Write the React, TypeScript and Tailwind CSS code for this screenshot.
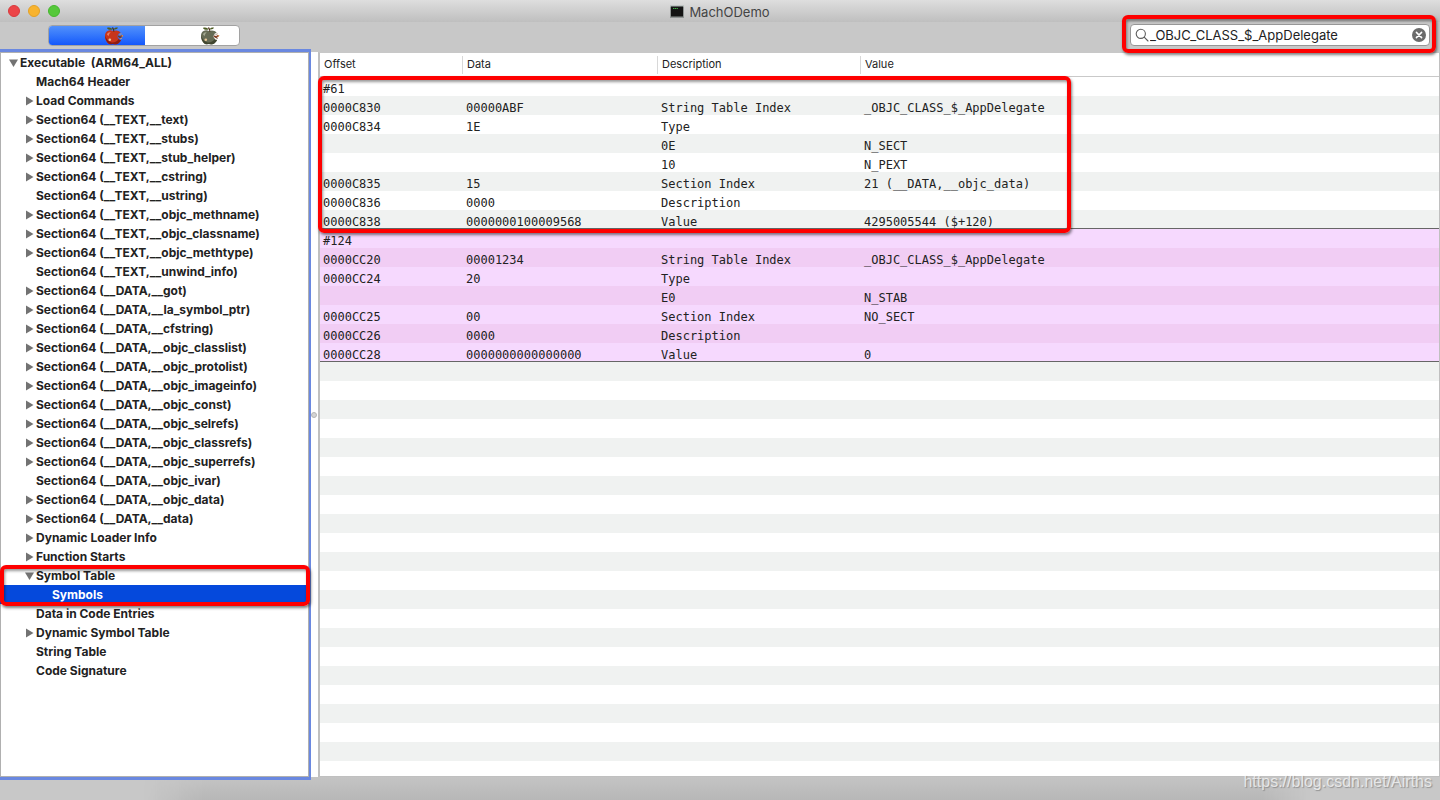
import { useState } from "react";

type Row = [string, string, string, string];

const symbols: { id: string; stab: boolean; rows: Row[] }[] = [
  {
    id: "#61",
    stab: false,
    rows: [
      ["0000C830", "00000ABF", "String Table Index", "_OBJC_CLASS_$_AppDelegate"],
      ["0000C834", "1E", "Type", ""],
      ["", "", "0E", "N_SECT"],
      ["", "", "10", "N_PEXT"],
      ["0000C835", "15", "Section Index", "21 (__DATA,__objc_data)"],
      ["0000C836", "0000", "Description", ""],
      ["0000C838", "0000000100009568", "Value", "4295005544 ($+120)"],
    ],
  },
  {
    id: "#124",
    stab: true,
    rows: [
      ["0000CC20", "00001234", "String Table Index", "_OBJC_CLASS_$_AppDelegate"],
      ["0000CC24", "20", "Type", ""],
      ["", "", "E0", "N_STAB"],
      ["0000CC25", "00", "Section Index", "NO_SECT"],
      ["0000CC26", "0000", "Description", ""],
      ["0000CC28", "0000000000000000", "Value", "0"],
    ],
  },
];

type Node = { label: string; leaf?: boolean };

const nodes: Node[] = [
  { label: "Mach64 Header", leaf: true },
  { label: "Load Commands" },
  { label: "Section64 (__TEXT,__text)" },
  { label: "Section64 (__TEXT,__stubs)" },
  { label: "Section64 (__TEXT,__stub_helper)" },
  { label: "Section64 (__TEXT,__cstring)" },
  { label: "Section64 (__TEXT,__ustring)", leaf: true },
  { label: "Section64 (__TEXT,__objc_methname)" },
  { label: "Section64 (__TEXT,__objc_classname)" },
  { label: "Section64 (__TEXT,__objc_methtype)" },
  { label: "Section64 (__TEXT,__unwind_info)", leaf: true },
  { label: "Section64 (__DATA,__got)" },
  { label: "Section64 (__DATA,__la_symbol_ptr)" },
  { label: "Section64 (__DATA,__cfstring)" },
  { label: "Section64 (__DATA,__objc_classlist)" },
  { label: "Section64 (__DATA,__objc_protolist)" },
  { label: "Section64 (__DATA,__objc_imageinfo)" },
  { label: "Section64 (__DATA,__objc_const)" },
  { label: "Section64 (__DATA,__objc_selrefs)" },
  { label: "Section64 (__DATA,__objc_classrefs)" },
  { label: "Section64 (__DATA,__objc_superrefs)" },
  { label: "Section64 (__DATA,__objc_ivar)", leaf: true },
  { label: "Section64 (__DATA,__objc_data)" },
  { label: "Section64 (__DATA,__data)" },
  { label: "Dynamic Loader Info" },
  { label: "Function Starts" },
];

const trailing: Node[] = [
  { label: "Data in Code Entries", leaf: true },
  { label: "Dynamic Symbol Table" },
  { label: "String Table", leaf: true },
  { label: "Code Signature", leaf: true },
];

function Arrow({ open }: { open?: boolean }) {
  return (
    <svg className="size-3 shrink-0" viewBox="0 0 12 12" fill="#727272" aria-hidden="true">
      {open ? <path d="M1 2.500h9L5.500 10z" /> : <path d="M2 1.500v9L9.500 6z" />}
    </svg>
  );
}

function Item({ label, leaf, open, indent = "pl-6", selected }: Node & { open?: boolean; indent?: string; selected?: boolean }) {
  return (
    <button
      type="button"
      className={`flex h-[19px] w-full items-center whitespace-pre text-left ${indent} ${
        selected ? "bg-[#0549dc] text-white" : "text-[#222]"
      }`}
    >
      {leaf ? <span className="w-3 shrink-0" /> : <Arrow open={open} />}
      {label}
    </button>
  );
}

function Apple({ skin, shade, shine, leaf }: { skin: string; shade: string; shine: string; leaf: string }) {
  return (
    <svg className="h-5 w-[22px]" viewBox="0 0 22 20" aria-hidden="true">
      <path
        d="M10 5C7.500 3.600 4 4.200 2.600 7C1 10.500 2.500 15.500 5.500 17.700C7 18.700 8.500 18 10 18C12 18.500 14 18.800 15.500 17.300C16.700 16.300 17.500 15.200 18 14C16.300 14.200 15.200 13 15.500 11.800C14 11.300 14 9.500 15.300 8.900C15.200 7.600 16.300 6.800 17.700 6.900C16 4.300 12.800 4 10 5Z"
        fill={skin}
      />
      <path
        d="M2.300 9.500C2 13 3.500 16 5.800 17.800C7.300 18.700 8.500 18 10 18C12 18.500 14.500 18.600 16 16.800C17 15.800 17.600 15 18 14C16.800 14.300 16 13.800 15.600 13C14 15.800 11 17 8 16.300C5 15.500 3 12.500 2.300 9.500Z"
        fill={shade}
      />
      <path d="M4 8.500C4.500 6.800 6 5.900 7.800 6.200C6.500 7.200 6 8.500 5.500 10.200Z" fill={shine} />
      <path d="M10.500 5.800C10.300 4.200 9.700 3 8.800 1.800L10 1.300C11 2.700 11.400 4.200 11.300 5.800Z" fill="#4a2b16" />
      <path d="M9.500 3.500C7.500 4.200 5 3.800 3.800 1.900C6 0.900 8.700 1.400 9.500 3.500Z" fill={leaf} />
      <path d="M10.600 3.300C11.500 1.900 13.300 1.200 15 1.800C14.200 3.300 12.200 3.900 10.600 3.300Z" fill={leaf} />
      <circle cx="6.800" cy="13.700" r="1.300" fill="#ecc99a" />
      <path d="M15 10.700C16 9.300 17 12.200 18 10.600C18.600 9.600 19.200 9.600 19.700 10.300" fill="none" stroke="#7d3b22" strokeWidth="1.700" />
      <path d="M16.500 8.500L18.700 7.800M17 13L19 12.300" stroke="#b59a86" strokeWidth="1" />
      <circle cx="19.300" cy="9.800" r="0.900" fill="#d9955b" />
    </svg>
  );
}

const cell = "overflow-hidden whitespace-pre p-0 pl-[3px] pt-[5px] align-top leading-[14px]";
const head = "h-6 border-b border-[#c9c9c9] p-0 text-left font-normal";
const mark = "pointer-events-none absolute z-20 rounded-md border-4 border-[#fe0000] shadow-[1px_2px_3px_rgba(0,0,0,0.5),inset_1px_2px_3px_rgba(0,0,0,0.4)]";

export default function App() {
  const [query, setQuery] = useState("_OBJC_CLASS_$_AppDelegate");
  let line = 0;

  return (
    <div className="relative flex h-screen flex-col overflow-hidden bg-[#c8c8c8] font-['Inter','Liberation_Sans',sans-serif] text-xs text-[#222]">
      <header className="relative flex h-[22px] shrink-0 items-center justify-center bg-linear-to-b from-[#dedede] to-[#bfbfbf]">
        <div className="absolute left-2 flex gap-2">
          <button type="button" aria-label="Close" className="size-3 rounded-full border border-[#d93a3d] bg-[#ec4548]" />
          <button type="button" aria-label="Minimize" className="size-3 rounded-full border border-[#e4a125] bg-[#f8b32e]" />
          <button type="button" aria-label="Zoom" className="size-3 rounded-full border border-[#44b72d] bg-[#55c83a]" />
        </div>
        <h1 className="flex items-center gap-[5px] pt-px text-[13px] leading-5 text-[#444]">
          <svg className="h-3.5 w-3.5" viewBox="0 0 14 14" aria-hidden="true">
            <rect y="0.500" width="14" height="12.500" fill="#8f9493" />
            <rect y="0.500" width="14" height="1" fill="#c9d4d2" />
            <rect x="1" y="1.500" width="12" height="10" fill="#141414" />
            <path d="M3 3.500h5" stroke="#3fae46" strokeWidth="1" strokeDasharray="1.300 0.500" />
          </svg>
          MachODemo
        </h1>
      </header>

      <div className="flex h-[30px] shrink-0 items-start justify-between pl-12 pr-2.5">
        <div className="mt-[3px] flex h-[21px] w-48 overflow-hidden rounded-[4px] border border-[#a2a2a2] bg-white">
          <button type="button" aria-label="RAW" className="-my-px -ml-px flex w-[97px] items-center justify-end bg-linear-to-b from-[#5593fb] to-[#1153fb] pr-5">
            <Apple skin="#c8341b" shade="#8d1c10" shine="#ee8060" leaf="#4d5c23" />
          </button>
          <button type="button" aria-label="RVA" className="-my-px flex flex-1 items-center justify-end pr-[18px]">
            <Apple skin="#666b54" shade="#41462f" shine="#a3a890" leaf="#4d5c23" />
          </button>
        </div>
        <div className="relative mt-0.5 flex h-[22px] w-[300px] items-center rounded-[4px] border border-[#979797] bg-white pl-1 pr-[3px]">
          <svg className="size-3.5 shrink-0" viewBox="0 0 14 14" fill="none" stroke="#5c5c5c" strokeWidth="1.100" aria-hidden="true">
            <circle cx="5.800" cy="5.800" r="4.600" />
            <path d="M9.200 9.200L13 13" strokeLinecap="round" />
          </svg>
          <input
            aria-label="Search"
            value={query}
            onChange={(e) => setQuery(e.target.value)}
            className="min-w-0 flex-1 bg-transparent pl-px text-[13px] leading-5 text-[#222] outline-none"
          />
          <button type="button" aria-label="Clear search" onClick={() => setQuery("")}>
            <svg className="size-3.5" viewBox="0 0 14 14" aria-hidden="true">
              <circle cx="7" cy="7" r="7" fill="#6b6b6b" />
              <path d="M4.400 4.400l5.200 5.200M9.600 4.400l-5.200 5.200" stroke="#fff" strokeWidth="1.500" strokeLinecap="round" />
            </svg>
          </button>
          <div className={`${mark} -bottom-2 -left-[9px] -right-[7px] -top-2.5`} />
        </div>
      </div>

      <main className="flex min-h-0 flex-1">
        <nav aria-label="File structure" className="relative z-10 w-[309px] shrink-0 border border-[#b0b0b0] bg-white font-bold shadow-[-1px_0_0_3px_#6a88e0]">
          <div className="-mx-px">
            <Item label="Executable  (ARM64_ALL)" open indent="pl-2" />
            {nodes.map((n) => (
              <Item key={n.label} {...n} />
            ))}
            <div className="relative">
              <Item label="Symbol Table" open />
              <Item label="Symbols" leaf selected indent="pl-10" />
              <div className={`${mark} -bottom-0.5 -top-px left-0 -right-px`} />
            </div>
            {trailing.map((n) => (
              <Item key={n.label} {...n} />
            ))}
          </div>
        </nav>

        <div className="flex w-[9px] shrink-0 items-center justify-center bg-white">
          <span className="size-1.5 rounded-full border border-[#b5b5b5] bg-[#d4d4d4]" />
        </div>

        <section className="relative min-w-0 flex-1 border-b border-l-2 border-r border-t border-[#c0c0c0] border-t-[#c8c8c8] bg-[repeating-linear-gradient(to_bottom,#fff_0_19px,#f0f2f1_19px_38px)] bg-[position:0_24px] bg-no-repeat">
          <table className="w-full table-fixed border-separate border-spacing-0">
            <colgroup>
              <col className="w-[143px]" />
              <col className="w-[195px]" />
              <col className="w-[203px]" />
              <col />
            </colgroup>
            <thead className="bg-white">
              <tr>
                {["Offset", "Data", "Description", "Value"].map((h, i) => (
                  <th key={h} scope="col" className={head}>
                    <div className={`pb-0.5 pl-1 text-[11px] leading-4 ${i < 3 ? "border-r border-[#d8d8d8]" : ""}`}>{h}</div>
                  </th>
                ))}
              </tr>
            </thead>
            <tbody className="font-['DejaVu_Sans_Mono',monospace] text-xs">
              {symbols.map((s) =>
                [[s.id, "", "", ""] as Row, ...s.rows].map((r, i) => {
                  const even = line++ % 2 === 0;
                  const bg = s.stab ? (even ? "bg-[#f6d9fe]" : "bg-[#f1cdf4]") : even ? "bg-white" : "bg-[#f0f2f1]";
                  const rule = i === s.rows.length ? "shadow-[inset_0_-1px_#666]" : "";
                  return (
                    <tr key={`${s.id}-${i}`} className={`h-[19px] ${bg}`}>
                      {r.map((c, j) => (
                        <td key={j} className={`${cell} ${rule}`}>
                          {c}
                        </td>
                      ))}
                    </tr>
                  );
                }),
              )}
            </tbody>
          </table>
          <div className={`${mark} -left-0.5 top-[23px] h-[157px] w-[753px]`} />
        </section>
      </main>

      <footer className="flex h-[23px] shrink-0">
        <div className="w-[10%]" />
        <div className="flex-1 bg-linear-to-b from-[#c4c4c4] to-[#b7b7b7] [mask-image:linear-gradient(to_right,transparent,#000_5%,#000_96%,transparent)]" />
        <div className="w-[9%]" />
      </footer>
      <a
        href="https://blog.csdn.net/Airths"
        className="absolute bottom-2 right-2 font-['Liberation_Sans',sans-serif] text-base leading-5 text-white/70 [text-shadow:1px_1px_1px_rgba(110,110,110,0.6)]"
      >
        https://blog.csdn.net/Airths
      </a>
    </div>
  );
}
